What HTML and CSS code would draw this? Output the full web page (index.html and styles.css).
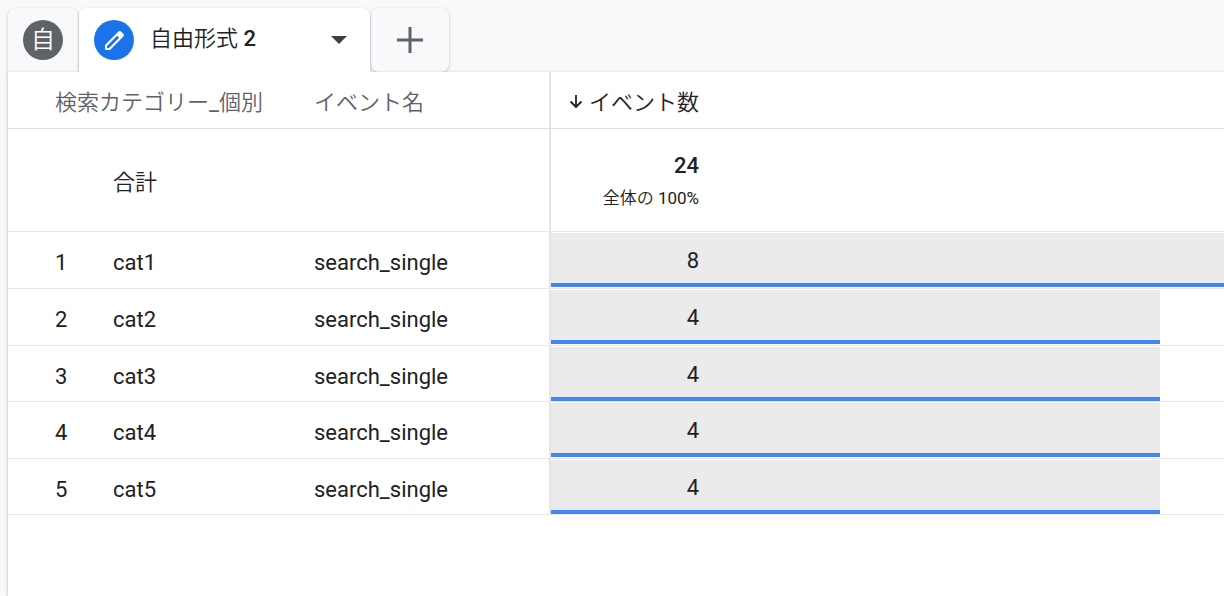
FILE: index.html
```html
<!DOCTYPE html>
<html lang="ja">
<head>
<meta charset="utf-8">
<meta name="viewport" content="width=device-width, initial-scale=1">
<title>自由形式 2</title>
<link rel="stylesheet" href="styles.css">
</head>
<body>
<nav class="tabs">
  <button class="tab tab-small" type="button"><span class="badge badge-gray">自</span></button>
  <button class="tab tab-active" type="button">
    <span class="badge badge-blue">
      <svg width="24" height="24" viewBox="0 0 24 24" aria-hidden="true"><path fill="#fff" fill-rule="evenodd" d="M3 17V22H8L21.200 8.800Q22.600 7.400 21.600 6L19 3.400Q17.600 2.400 16.200 3.800ZM5 18L15.200 7.800 17.200 9.800 7 20H5Z"/></svg>
    </span>
    <span class="tab-title">自由形式 <b>2</b></span>
    <svg class="caret" width="16" height="8" viewBox="0 0 16 8" aria-hidden="true"><path d="M0 0h16L8 8z" fill="#3c4043"/></svg>
  </button>
  <button class="tab tab-add" type="button" aria-label="追加">
    <svg width="26" height="26" viewBox="0 0 26 26" aria-hidden="true"><path d="M13 0v26M0 13h26" stroke="#5f6368" stroke-width="3"/></svg>
  </button>
</nav>
<main class="panel">
  <table class="report">
    <colgroup><col class="col-index"><col class="col-category"><col class="col-event"><col class="col-metric"></colgroup>
    <thead>
      <tr>
        <th class="index" colspan="2" scope="col">検索カテゴリー<span class="latin">_</span>個別</th>
        <th scope="col">イベント名</th>
        <th class="metric" scope="col"><div class="value sort"><svg width="14" height="14" viewBox="0 0 14 14" fill="none" stroke="#202124" stroke-width="1.800" aria-hidden="true"><path d="M7 0v12M1.500 6.500L7 12 12.500 6.500"/></svg>イベント数</div></th>
      </tr>
    </thead>
    <tbody>
      <tr class="total">
        <td></td><td class="jp">合計</td><td></td>
        <td class="metric"><div class="value"><b>24</b><small>全体の <span class="latin">100%</span></small></div></td>
      </tr>
      <tr><td class="index">1</td><td>cat1</td><td>search_single</td><td class="metric"><div class="bar" style="width:100%"><div class="value">8</div></div></td></tr>
      <tr><td class="index">2</td><td>cat2</td><td>search_single</td><td class="metric"><div class="bar" style="width:50%"><div class="value">4</div></div></td></tr>
      <tr class="compact"><td class="index">3</td><td>cat3</td><td>search_single</td><td class="metric"><div class="bar" style="width:50%"><div class="value">4</div></div></td></tr>
      <tr><td class="index">4</td><td>cat4</td><td>search_single</td><td class="metric"><div class="bar" style="width:50%"><div class="value">4</div></div></td></tr>
      <tr class="compact"><td class="index">5</td><td>cat5</td><td>search_single</td><td class="metric"><div class="bar" style="width:50%"><div class="value">4</div></div></td></tr>
    </tbody>
  </table>
</main>
</body>
</html>
```
FILE: styles.css
```css
* { box-sizing: border-box; }
body {
  margin: 0;
  min-height: 100vh;
  padding: 8px 0 0 8px;
  display: flex;
  flex-direction: column;
  overflow: hidden;
  background: #f8f9fb;
  color: #202124;
  font: 22px/28px Roboto, "Noto Sans CJK JP", sans-serif;
}
b { font-weight: 500; }
.latin { font-weight: 400; }
.tabs { display: flex; gap: 1px; height: 64px; }
.tab {
  display: flex;
  align-items: center;
  border: 0;
  padding: 0 16px;
  border-radius: 8px;
  background: #f8f9fb;
  box-shadow: 0 1px 3px rgba(60, 64, 67, .3);
  color: inherit;
  font: inherit;
}
.tab-small { width: 70px; padding: 0 15px; border-radius: 8px 8px 0 0; }
.tab-active {
  position: relative;
  width: 291px;
  padding: 0 23px 0 15px;
  border-radius: 8px 8px 0 0;
  background: #fff;
  clip-path: inset(-4px -4px 0);
}
.tab-add { width: 78px; justify-content: center; }
.badge {
  display: flex;
  flex: none;
  align-items: center;
  justify-content: center;
  width: 40px;
  height: 40px;
  border-radius: 50%;
  color: #fff;
  font-size: 24px;
  font-weight: 350;
}
.badge-gray { background: #5f6368; }
.badge-blue { background: #1a73e8; }
.tab-title { margin-left: 16px; padding-bottom: 2px; font-weight: 350; }
.caret { margin-left: auto; }
.panel {
  flex: 1;
  overflow: hidden;
  background: #fff;
  box-shadow: 0 1px 3px rgba(60, 64, 67, .4);
}
.report {
  width: 1761px;
  table-layout: fixed;
  border-collapse: separate;
  border-spacing: 0;
}
.col-index { width: 105px; }
.col-category { width: 201px; }
.col-event { width: 235px; }
th, td {
  height: 57px;
  padding: 6px 0 0;
  border-bottom: 1px solid #e8e8e8;
  text-align: left;
}
th { color: #5f6368; font-weight: 350; border-bottom: 1px solid #e0e0e0; }
.index { padding-left: 47px; }
.total td { height: 103px; }
.compact td { height: 56px; }
.jp { font-weight: 350; }
.metric {
  padding: 0;
  border-left: 2px solid #e4e4e4;
  color: #202124;
}
.value { width: 148px; text-align: right; }
.sort {
  display: flex;
  align-items: center;
  justify-content: flex-end;
  gap: 6px;
  padding-top: 6px;
}
.sort svg { margin-bottom: 2px; }
.total .value { padding-top: 4px; }
.value small { display: block; margin-top: 4px; font-size: 17px; font-weight: 350; }
.bar {
  display: flex;
  align-items: center;
  height: 54px;
  padding-top: 6px;
  border-bottom: 4px solid #4285f4;
  background: #ebebeb;
}
```
